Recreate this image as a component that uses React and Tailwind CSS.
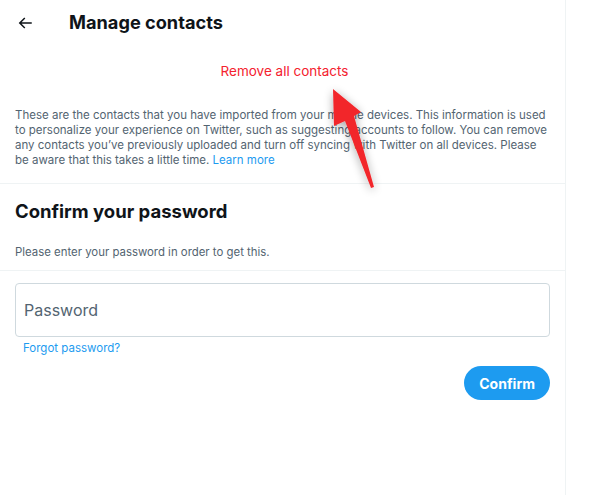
import React from "react";

export default function App() {
  const font = { fontFamily: "Inter, 'Noto Sans', sans-serif" };
  return (
    <div className="relative w-[600px] h-[495px] bg-white overflow-hidden" style={font}>
      <div className="w-[566px] h-[495px] border-r border-[#eff3f4]">
        {/* Header */}
        <div className="flex items-center h-[46px] px-[16px]">
          <svg width="18" height="18" viewBox="0 0 24 24" className="text-[#0f1419]">
            <path fill="currentColor" d="M7.414 13l5.043 5.04-1.414 1.42L3.586 12l7.457-7.46 1.414 1.42L7.414 11H21v2H7.414z" />
          </svg>
          <h1 className="ml-[35px] text-[18.2px] font-bold text-[#0f1419]">Manage contacts</h1>
        </div>
        {/* Remove all */}
        <div className="flex justify-center pt-[15px] pb-[27px]">
          <span className="text-[13.5px] text-[#f4212e] ml-[4px]">Remove all contacts</span>
        </div>
        {/* Description */}
        <p className="px-[15px] text-[11.5px] leading-[15px] text-[#536471] whitespace-nowrap">
          These are the contacts that you have imported from your mobile devices. This information is used<br />
          to personalize your experience on Twitter, such as suggesting accounts to follow. You can remove<br />
          any contacts you’ve previously uploaded and turn off syncing with Twitter on all devices. Please<br />
          be aware that this takes a little time. <span className="text-[#1d9bf0]">Learn more</span>
        </p>
        <div className="mt-[15px] border-t border-[#eff3f4]" />
        <h2 className="px-[15px] pt-[15px] text-[18.5px] font-bold text-[#0f1419] leading-[24px]">Confirm your password</h2>
        <p className="px-[15px] pt-[21px] text-[11.4px] leading-[16px] text-[#536471]">Please enter your password in order to get this.</p>
        <div className="mt-[10px] border-t border-[#eff3f4]" />
        <div className="px-[15px] pt-[12px]">
          <div className="h-[54px] rounded-[4px] border border-[#cfd9de] flex items-center px-[8px]">
            <span className="text-[16px] text-[#536471]">Password</span>
          </div>
          <div className="pt-[3px] pl-[8px] text-[11.5px] leading-[16px] text-[#1d9bf0]">Forgot password?</div>
          <div className="flex justify-end pt-[10px]">
            <button className="h-[34px] px-[15px] rounded-full bg-[#1d9bf0] text-white text-[14px] font-bold">Confirm</button>
          </div>
        </div>
      </div>
      {/* Annotation arrow */}
      <svg className="absolute left-0 top-0 pointer-events-none" width="600" height="495">
        <defs>
          <filter id="sh" x="-50%" y="-50%" width="200%" height="200%">
            <feGaussianBlur in="SourceAlpha" stdDeviation="5" />
            <feOffset dx="0" dy="2" result="b" />
            <feComponentTransfer><feFuncA type="linear" slope="0.35" /></feComponentTransfer>
            <feMerge><feMergeNode /><feMergeNode in="SourceGraphic" /></feMerge>
          </filter>
        </defs>
        <polygon filter="url(#sh)" fill="#f2262b" points="333,89 361,112 354,116 374,187 371,188 345,121 334,126" />
      </svg>
    </div>
  );
}
